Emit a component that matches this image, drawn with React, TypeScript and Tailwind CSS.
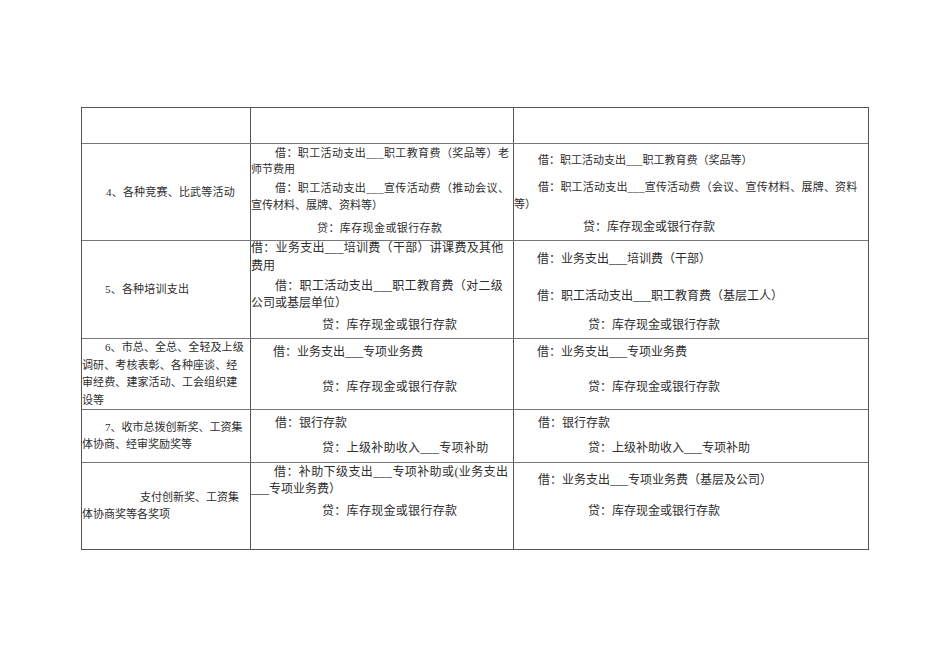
import React from "react";

const font = "font-['Liberation_Serif','Noto_Sans_CJK_SC',serif]";

export default function App() {
  return (
    <div className={`w-[950px] h-[672px] bg-white text-[#2e2e2e] ${font} pt-[107px] pl-[81px]`}>
      <div className="w-[788px] border-l border-r border-[#555]">
        {/* Row 1 */}
        <div className="grid grid-cols-[168px_263px_355px] h-[36px] border-t border-[#555]">
          <div />
          <div className="border-l border-[#555]" />
          <div className="border-l border-[#555]" />
        </div>

        {/* Row 2 */}
        <div className="grid grid-cols-[168px_263px_355px] h-[97px] border-t border-[#777]">
          <div className="flex items-center text-[11px]">
            <div className="pl-[24px] whitespace-nowrap tracking-[0.2px]">4、各种竞赛、比武等活动</div>
          </div>
          <div className="border-l border-[#555] pt-[2px] text-[11px] whitespace-nowrap">
            <div className="h-[14px] leading-[14px] pl-[24px] tracking-[0.4px]">借：职工活动支出___职工教育费（奖品等）老</div>
            <div className="h-[14px] leading-[14px] mt-[2px]">师节费用</div>
            <div className="h-[14px] leading-[14px] mt-[5px] pl-[24px] tracking-[0.4px]">借：职工活动支出___宣传活动费（推动会议、</div>
            <div className="h-[14px] leading-[14px] mt-[3px]">宣传材料、展牌、资料等）</div>
            <div className="h-[14px] leading-[14px] mt-[9px] pl-[66px] tracking-[0.4px]">贷：库存现金或银行存款</div>
          </div>
          <div className="border-l border-[#555] pt-[9px] text-[11px] whitespace-nowrap">
            <div className="h-[14px] leading-[14px] pl-[24px]">借：职工活动支出___职工教育费（奖品等）</div>
            <div className="h-[14px] leading-[14px] mt-[13px] pl-[24px] tracking-[0.2px]">借：职工活动支出___宣传活动费（会议、宣传材料、展牌、资料</div>
            <div className="h-[14px] leading-[14px] mt-[3px]">等）</div>
            <div className="h-[14px] leading-[14px] mt-[9px] pl-[69px] text-[12px]">贷：库存现金或银行存款</div>
          </div>
        </div>

        {/* Row 3 */}
        <div className="grid grid-cols-[168px_263px_355px] h-[98px] border-t border-[#777]">
          <div className="flex items-center text-[11px]">
            <div className="pl-[23px] whitespace-nowrap tracking-[0.2px]">5、各种培训支出</div>
          </div>
          <div className="border-l border-[#555] pt-[0px] text-[12px] whitespace-nowrap">
            <div className="h-[14px] leading-[14px] tracking-[0.3px]">借：业务支出___培训费（干部）讲课费及其他</div>
            <div className="h-[14px] leading-[14px] mt-[4px]">费用</div>
            <div className="h-[14px] leading-[14px] mt-[6px] pl-[24px] tracking-[0.3px]">借：职工活动支出___职工教育费（对二级</div>
            <div className="h-[14px] leading-[14px] mt-[3px]">公司或基层单位）</div>
            <div className="h-[14px] leading-[14px] mt-[8px] pl-[71px] tracking-[0.3px]">贷：库存现金或银行存款</div>
          </div>
          <div className="border-l border-[#555] pt-[11px] text-[12px] whitespace-nowrap">
            <div className="h-[14px] leading-[14px] pl-[23px]">借：业务支出___培训费（干部）</div>
            <div className="h-[14px] leading-[14px] mt-[23px] pl-[23px]">借：职工活动支出___职工教育费（基层工人）</div>
            <div className="h-[14px] leading-[14px] mt-[15px] pl-[74px]">贷：库存现金或银行存款</div>
          </div>
        </div>

        {/* Row 4 */}
        <div className="grid grid-cols-[168px_263px_355px] h-[71px] border-t border-[#777]">
          <div className="flex items-center text-[11px]">
            <div className="whitespace-nowrap leading-[17.5px] tracking-[0.1px]">
              <div className="pl-[23px]">6、市总、全总、全轻及上级</div>
              <div>调研、考核表彰、各种座谈、经</div>
              <div>审经费、建家活动、工会组织建</div>
              <div>设等</div>
            </div>
          </div>
          <div className="border-l border-[#555] pt-[6px] text-[12px] whitespace-nowrap">
            <div className="h-[14px] leading-[14px] pl-[22px]">借：业务支出___专项业务费</div>
            <div className="h-[14px] leading-[14px] mt-[21px] pl-[71px] tracking-[0.3px]">贷：库存现金或银行存款</div>
          </div>
          <div className="border-l border-[#555] pt-[6px] text-[12px] whitespace-nowrap">
            <div className="h-[14px] leading-[14px] pl-[23px]">借：业务支出___专项业务费</div>
            <div className="h-[14px] leading-[14px] mt-[21px] pl-[74px]">贷：库存现金或银行存款</div>
          </div>
        </div>

        {/* Row 5 */}
        <div className="grid grid-cols-[168px_263px_355px] h-[53px] border-t border-[#777]">
          <div className="flex items-center text-[11px]">
            <div className="whitespace-nowrap leading-[17.5px]">
              <div className="pl-[23px]">7、收市总拨创新奖、工资集</div>
              <div>体协商、经审奖励奖等</div>
            </div>
          </div>
          <div className="border-l border-[#555] pt-[6px] text-[12px] whitespace-nowrap">
            <div className="h-[14px] leading-[14px] pl-[24px]">借：银行存款</div>
            <div className="h-[14px] leading-[14px] mt-[11px] pl-[71px] tracking-[0.3px]">贷：上级补助收入___专项补助</div>
          </div>
          <div className="border-l border-[#555] pt-[6px] text-[12px] whitespace-nowrap">
            <div className="h-[14px] leading-[14px] pl-[24px]">借：银行存款</div>
            <div className="h-[14px] leading-[14px] mt-[11px] pl-[74px]">贷：上级补助收入___专项补助</div>
          </div>
        </div>

        {/* Row 6 */}
        <div className="grid grid-cols-[168px_263px_355px] h-[88px] border-t border-b border-t-[#777] border-b-[#555]">
          <div className="flex items-center text-[11px]">
            <div className="whitespace-nowrap leading-[17.5px]">
              <div className="pl-[58px]">支付创新奖、工资集</div>
              <div>体协商奖等各奖项</div>
            </div>
          </div>
          <div className="border-l border-[#555] pt-[2px] text-[12px] whitespace-nowrap">
            <div className="h-[14px] leading-[14px] pl-[23px] tracking-[0.4px]">借：补助下级支出___专项补助或(业务支出</div>
            <div className="h-[14px] leading-[14px] mt-[3px]">___专项业务费）</div>
            <div className="h-[14px] leading-[14px] mt-[8px] pl-[71px] tracking-[0.3px]">贷：库存现金或银行存款</div>
          </div>
          <div className="border-l border-[#555] pt-[10px] text-[12px] whitespace-nowrap">
            <div className="h-[14px] leading-[14px] pl-[24px]">借：业务支出___专项业务费（基层及公司）</div>
            <div className="h-[14px] leading-[14px] mt-[17px] pl-[74px]">贷：库存现金或银行存款</div>
          </div>
        </div>
      </div>
    </div>
  );
}
